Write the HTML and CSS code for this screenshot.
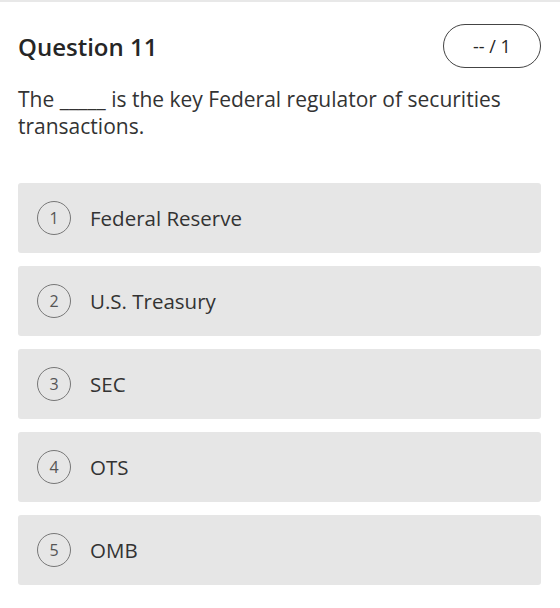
FILE: index.html
```html
<!DOCTYPE html>
<html lang="en">
<head>
<meta charset="UTF-8" />
<title>Question 11</title>
<link rel="stylesheet" href="styles.css">
</head>
<body>

<div class="top-bar"></div>

<div class="question">
  <div class="question-head">
    <h2 class="question-title">Question 11</h2>
    <span class="score-pill">-- / 1</span>
  </div>

  <p class="question-text">The _____ is the key Federal regulator of securities transactions.</p>

  <ul class="answer-list">
    <li class="answer"><span class="answer-num">1</span>Federal Reserve</li>
    <li class="answer"><span class="answer-num">2</span>U.S. Treasury</li>
    <li class="answer"><span class="answer-num">3</span>SEC</li>
    <li class="answer"><span class="answer-num">4</span>OTS</li>
    <li class="answer"><span class="answer-num">5</span>OMB</li>
  </ul>
</div>

</body>
</html>
```

FILE: styles.css
```css
body {
  margin: 0;
  font-family: "Open Sans", Arial, sans-serif;
  color: #333;
  background: #fff;
}

.top-bar {
  height: 2px;
  background: #e8e8e8;
}

.question {
  padding: 0 19px 0 18px;
}

.question-head {
  display: flex;
  justify-content: space-between;
  align-items: center;
  padding-top: 22px;
  height: 44px;
}

.question-title {
  margin: 0;
  font-size: 24px;
  font-weight: 600;
  color: #262626;
}

.score-pill {
  box-sizing: border-box;
  width: 98px;
  height: 44px;
  border: 1.5px solid #444;
  border-radius: 22px;
  display: flex;
  justify-content: center;
  align-items: center;
  font-size: 18px;
  color: #262626;
}

.question-text {
  margin: 18px 0 0;
  font-size: 21px;
  line-height: 27px;
  color: #333;
}

.answer-list {
  list-style: none;
  margin: 43px 0 0;
  padding: 0;
  display: flex;
  flex-direction: column;
  gap: 13px;
}

.answer {
  height: 70px;
  background: #e6e6e6;
  border-radius: 3px;
  display: flex;
  align-items: center;
  padding-left: 19px;
  font-size: 20.5px;
  color: #333;
}

.answer-num {
  box-sizing: border-box;
  width: 34px;
  height: 34px;
  border: 1.5px solid #777;
  border-radius: 50%;
  display: flex;
  justify-content: center;
  align-items: center;
  font-size: 16px;
  color: #555;
  margin-right: 19px;
}
```
